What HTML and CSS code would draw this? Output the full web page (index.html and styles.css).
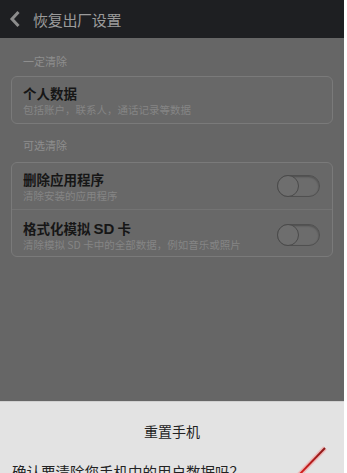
FILE: index.html
```html
<!DOCTYPE html>
<html lang="zh-CN">
<head>
    <meta charset="UTF-8">
    <meta name="viewport" content="width=device-width, initial-scale=1.0">
    <title>恢复出厂设置</title>
    <link rel="stylesheet" href="styles.css">
</head>
<body>
    <div class="screen">
        <header class="topbar">
            <svg class="back" width="12" height="18" viewBox="0 0 12 18">
                <path d="M9.5 2 L3 9 L9.5 16" fill="none" stroke="#8c8c8c" stroke-width="3"/>
            </svg>
            <h1>恢复出厂设置</h1>
        </header>

        <main class="content">
            <p class="group-label">一定清除</p>
            <div class="card">
                <div class="row">
                    <div class="row-text">
                        <strong>个人数据</strong>
                        <small>包括账户，联系人，通话记录等数据</small>
                    </div>
                </div>
            </div>

            <p class="group-label">可选清除</p>
            <div class="card">
                <div class="row">
                    <div class="row-text">
                        <strong>删除应用程序</strong>
                        <small>清除安装的应用程序</small>
                    </div>
                    <span class="toggle"><span class="knob"></span></span>
                </div>
                <div class="row">
                    <div class="row-text">
                        <strong>格式化模拟 <span class="latin">SD</span> 卡</strong>
                        <small>清除模拟 SD 卡中的全部数据，例如音乐或照片</small>
                    </div>
                    <span class="toggle"><span class="knob"></span></span>
                </div>
            </div>
        </main>

        <!-- Boîte de dialogue en bas -->
        <section class="sheet">
            <h2>重置手机</h2>
            <p>确认要清除您手机中的用户数据吗？</p>
        </section>

        <svg class="arrow" width="50" height="40" viewBox="0 0 50 40">
            <defs>
                <linearGradient id="redLine" x1="1" y1="0" x2="0" y2="1">
                    <stop offset="0" stop-color="#8a1a1a"/>
                    <stop offset="1" stop-color="#e02020"/>
                </linearGradient>
            </defs>
            <path d="M43 5 L15 34" stroke="#f4a0a0" stroke-width="5" opacity="0.6"/>
            <path d="M43 5 L15 34" stroke="url(#redLine)" stroke-width="2"/>
        </svg>
    </div>
</body>
</html>
```

FILE: styles.css
```css
* {
    margin: 0;
    padding: 0;
    box-sizing: border-box;
    font-family: 'Noto Sans CJK SC', 'Noto Sans', sans-serif;
}

html, body {
    background: #ffffff;
    overflow: hidden;
}

.screen {
    position: relative;
    width: 344px;
    height: 473px;
    background-color: #666666;
    overflow: hidden;
}

.topbar {
    height: 38px;
    background-color: #1e1f22;
    display: flex;
    align-items: center;
    padding-left: 9px;
}

.topbar .back {
    margin-right: 12px;
}

.topbar h1 {
    font-size: 15px;
    font-weight: normal;
    color: #9b9b9b;
    letter-spacing: -0.3px;
}

.content {
    padding: 12px 11px 0 11px;
}

.group-label {
    font-size: 11px;
    color: #8e8e8e;
    line-height: 22px;
    padding-left: 12px;
    margin-bottom: 4px;
}

.group-label + .card {
    margin-bottom: 10px;
}

.group-label + .card + .group-label {
    margin-bottom: 6px;
}

.card {
    border: 1px solid #7a7a7a;
    border-radius: 6px;
    background-color: #686868;
    width: 322px;
}

.row {
    display: flex;
    align-items: center;
    justify-content: space-between;
    padding: 8px 12px 6px 11px;
    min-height: 46px;
}

.row + .row {
    border-top: 1px solid #737373;
    padding-top: 10px;
    padding-bottom: 4px;
}

.row-text strong {
    display: block;
    font-size: 13.5px;
    line-height: 17px;
    color: #161616;
    font-weight: bold;
}

.row-text .latin {
    font-family: 'Liberation Sans', sans-serif;
    font-size: 15px;
}

.row-text small {
    display: block;
    font-size: 10.5px;
    line-height: 15px;
    color: #858585;
}

.toggle {
    position: relative;
    width: 43px;
    height: 22px;
    border: 1px solid #505050;
    border-radius: 11px;
    background-color: #6c6c6c;
    box-shadow: inset 0 1px 2px rgba(0, 0, 0, 0.3);
    margin-top: -2px;
}

.knob {
    position: absolute;
    left: -1px;
    top: -1px;
    width: 22px;
    height: 22px;
    border-radius: 50%;
    border: 1px solid #4a4a4a;
    background-color: #6e6e6e;
}

.sheet {
    position: absolute;
    left: 0;
    top: 401px;
    width: 344px;
    height: 80px;
    background-color: #e3e3e3;
    border-top: 1px solid #d0d0d0;
}

.sheet h2 {
    font-size: 14px;
    font-weight: normal;
    color: #222222;
    text-align: center;
    margin-top: 19px;
    line-height: 20px;
}

.sheet p {
    font-size: 14.5px;
    color: #222222;
    padding-left: 12px;
    margin-top: 21px;
    line-height: 20px;
}

.arrow {
    position: absolute;
    left: 282px;
    top: 443px;
}
```
